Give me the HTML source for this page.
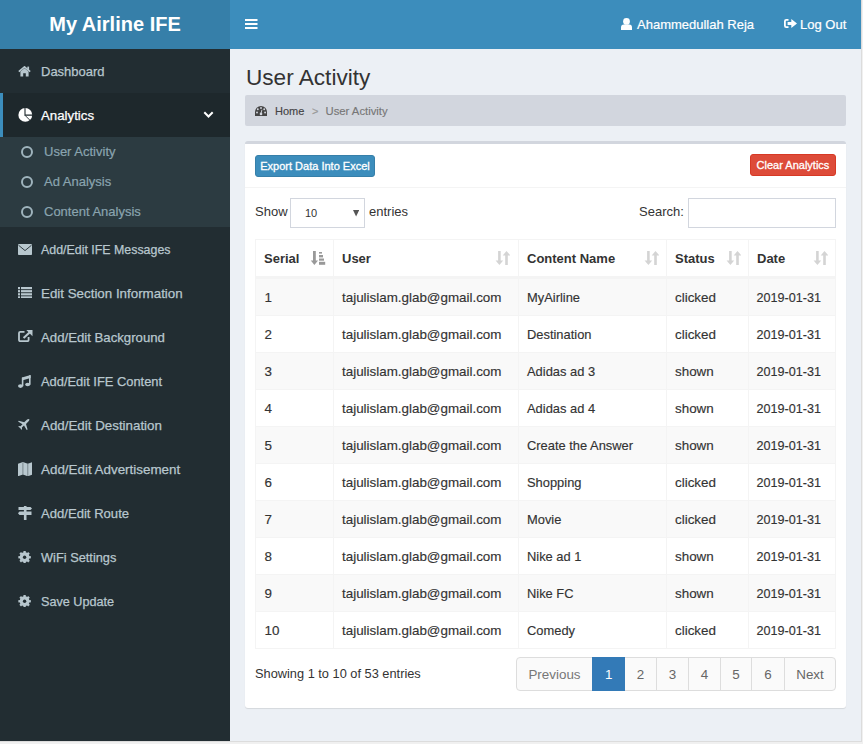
<!DOCTYPE html>
<html><head><meta charset="utf-8">
<style>
*{box-sizing:border-box;margin:0;padding:0}
html,body{width:863px;height:744px;overflow:hidden;background:#f0f0f0;font-family:"Liberation Sans",sans-serif;font-size:13px;color:#333}
.page{position:absolute;left:0;top:0;width:861px;height:741px;background:#ecf0f5;overflow:hidden}
.edge-r{position:absolute;left:861px;top:0;width:1px;height:742px;background:#dcdcdc}
.edge-b{position:absolute;left:0;top:741px;width:862px;height:1px;background:#dcdcdc}
.logo{position:absolute;left:0;top:0;width:230px;height:49px;background:#367fa9;color:#fff;font-weight:bold;font-size:20px;line-height:49px;text-align:center}
.navbar{position:absolute;left:230px;top:0;width:631px;height:49px;background:#3c8dbc;color:#fff;-webkit-text-stroke:0.2px #fff}
.sidebar{position:absolute;left:0;top:49px;width:230px;height:692px;background:#222d32}
.abs{position:absolute;white-space:nowrap}
.mi{position:absolute;left:0;width:230px;height:44px;color:#b8c7ce}
.mi .t{position:absolute;left:41px;top:1px;line-height:44px;-webkit-text-stroke:0.25px currentColor}
.mi svg{position:absolute}
.active{background:#1e282c;color:#fff;border-left:3px solid #3c8dbc}
.tree{position:absolute;left:0;top:88px;width:230px;height:90px;background:#2c3b41}
.ti{position:absolute;left:0;width:230px;height:30px;color:#8aa4af}
.ti .t{position:absolute;left:44px;line-height:30px;top:0;-webkit-text-stroke:0.2px currentColor}
.ti .c{position:absolute;left:20.7px;top:8.7px;width:12.5px;height:12.5px;border:2.3px solid #9fb4bd;border-radius:50%}
.content{position:absolute;left:230px;top:49px;width:631px;height:692px}

.title{position:absolute;left:246px;top:62.5px;font-size:22.6px;line-height:30px;color:#333;white-space:nowrap}
.bc{position:absolute;left:245px;top:95px;width:601px;height:31px;background:#d2d6de;border-radius:2px;font-size:11px;color:#444;-webkit-text-stroke:0.15px currentColor}
.box{position:absolute;left:245px;top:141px;width:601px;height:567px;background:#fff;border-top:3px solid #d2d6de;border-radius:3px;box-shadow:0 1px 1px rgba(0,0,0,0.1)}
.btn{position:absolute;color:#fff;border-radius:3px;font-size:11px;line-height:20px;text-align:center;white-space:nowrap;-webkit-text-stroke:0.3px #fff}
.inp{position:absolute;border:1px solid #d2d6de;background:#fff}
.tbl{position:absolute;left:255px;top:239px;width:581px;height:410px;border:1px solid #f4f4f4;z-index:2}
.tr{position:absolute;left:255px;width:581px;height:37px;border-top:1px solid #f4f4f4}
.tr span{position:absolute;top:1px;line-height:36px;font-size:13.4px;color:#333;white-space:nowrap;-webkit-text-stroke:0.15px #333}
.vl{position:absolute;top:239px;width:1px;height:410px;background:#f4f4f4;z-index:2}
.th{position:absolute;top:240px;line-height:38px;font-weight:bold;font-size:13px;color:#333;white-space:nowrap}
.pg{position:absolute;top:657px;height:34px;border:1px solid #ddd;background:#fafafa;color:#666;font-size:13.4px;line-height:34px;text-align:center}
</style></head><body>
<div class="page">
  <div class="logo">My Airline IFE</div>
  <div class="navbar">
    <svg class="abs" style="left:15px;top:19px" width="12.5" height="10" viewBox="0 0 12.5 10"><rect x="0" y="0" width="12.5" height="2" fill="#fff"/><rect x="0" y="4" width="12.5" height="2" fill="#fff"/><rect x="0" y="8" width="12.5" height="2" fill="#fff"/></svg>
    <svg class="abs" style="left:390.7px;top:17.8px" width="11" height="12" viewBox="0 0 11 12"><circle cx="5.5" cy="3.4" r="3.4" fill="#fff"/><path d="M0 12 L0 9.5 Q0 6.6 2.8 6.6 L8.2 6.6 Q11 6.6 11 9.5 L11 12Z" fill="#fff"/></svg>
    <div class="abs" style="left:407px;top:16px;line-height:18px">Ahammedullah Reja</div>
    <svg class="abs" style="left:554px;top:19.4px" width="13" height="9" viewBox="0 0 13 9"><path d="M4.5 0.9 L2.3 0.9 Q0.9 0.9 0.9 2.3 L0.9 6.7 Q0.9 8.1 2.3 8.1 L4.5 8.1" stroke="#fff" stroke-width="1.8" fill="none"/><path d="M3.6 2.9 L7.3 2.9 L7.3 0 L13 4.5 L7.3 9 L7.3 6.1 L3.6 6.1Z" fill="#fff"/></svg>
    <div class="abs" style="left:570px;top:16px;line-height:18px">Log Out</div>
  </div>
  <div class="sidebar">
    <div class="mi" style="top:0"><svg style="left:18px;top:17px" width="13" height="10.5" viewBox="0 0 13 10.5"><path d="M0.8 5.6 L6.5 0.9 L12.2 5.6" stroke="#b8c7ce" stroke-width="1.7" fill="none" stroke-linejoin="miter"/><rect x="9.3" y="0.6" width="1.8" height="3.5" fill="#b8c7ce"/><path d="M2.4 5.6 L6.5 2.3 L10.6 5.6 L10.6 10.5 L7.8 10.5 L7.8 7.3 L5.2 7.3 L5.2 10.5 L2.4 10.5Z" fill="#b8c7ce"/></svg><span class="t">Dashboard</span></div>
    <div class="mi active" style="top:44px"><svg style="left:14.5px;top:14.6px" width="15" height="14" viewBox="0 0 15 14"><circle cx="7.3" cy="6.9" r="6.9" fill="#fff"/><path d="M7 7 L7 -1 M6.5 7.1 L15 7.1" stroke="#1e282c" stroke-width="1.1"/><path d="M7 7.3 L12.5 12.8" stroke="#1e282c" stroke-width="0.9"/></svg><span class="t" style="left:38px;font-size:13.25px">Analytics</span><svg style="left:200px;top:18px" width="11" height="8" viewBox="0 0 11 8"><path d="M1.3 1.3 L5.5 5.5 L9.7 1.3" stroke="#fff" stroke-width="2" fill="none"/></svg></div>
    <div class="tree">
      <div class="ti" style="top:0"><span class="c"></span><span class="t">User Activity</span></div>
      <div class="ti" style="top:30px"><span class="c"></span><span class="t">Ad Analysis</span></div>
      <div class="ti" style="top:60px"><span class="c"></span><span class="t">Content Analysis</span></div>
    </div>
    <div class="mi" style="top:178px"><svg style="left:18px;top:17px" width="14" height="11" viewBox="0 0 14 11"><rect x="0" y="0" width="14" height="11" rx="0.8" fill="#b8c7ce"/><path d="M0.5 1.2 L7 6.6 L13.5 1.2" stroke="#222d32" stroke-width="0.9" fill="none"/></svg><span class="t" style="font-size:12.4px">Add/Edit IFE Messages</span></div>
    <div class="mi" style="top:222px"><svg style="left:18px;top:15.6px" width="14" height="11.5" viewBox="0 0 14 11.5"><rect x="0" y="0" width="2" height="2.2" fill="#b8c7ce"/><rect x="3" y="0" width="11" height="2.2" fill="#b8c7ce"/><rect x="0" y="3.1" width="2" height="2.2" fill="#b8c7ce"/><rect x="3" y="3.1" width="11" height="2.2" fill="#b8c7ce"/><rect x="0" y="6.2" width="2" height="2.2" fill="#b8c7ce"/><rect x="3" y="6.2" width="11" height="2.2" fill="#b8c7ce"/><rect x="0" y="9.3" width="2" height="2.2" fill="#b8c7ce"/><rect x="3" y="9.3" width="11" height="2.2" fill="#b8c7ce"/></svg><span class="t" style="font-size:13.35px">Edit Section Information</span></div>
    <div class="mi" style="top:266px"><svg style="left:18px;top:15px" width="14.5" height="12" viewBox="0 0 14.5 12"><path d="M6.5 1.8 L2.3 1.8 Q1 1.8 1 3.1 L1 10 Q1 11.2 2.3 11.2 L9.3 11.2 Q10.6 11.2 10.6 10 L10.6 7" stroke="#b8c7ce" stroke-width="1.8" fill="none"/><path d="M8.3 0 L14.5 0 L14.5 6.2Z" fill="#b8c7ce"/><path d="M5.6 8 L12.6 1.5" stroke="#b8c7ce" stroke-width="2.1"/></svg><span class="t" style="font-size:13.2px">Add/Edit Background</span></div>
    <div class="mi" style="top:310px"><svg style="left:18px;top:16.2px" width="13" height="13" viewBox="0 0 13 13"><path d="M4 2.6 L12.6 0 L12.6 2.9 L4 5.5Z" fill="#b8c7ce"/><rect x="3.8" y="2.6" width="1.6" height="8.6" fill="#b8c7ce"/><rect x="11" y="0.3" width="1.6" height="9.3" fill="#b8c7ce"/><ellipse cx="2.5" cy="11.1" rx="2.5" ry="1.8" fill="#b8c7ce"/><ellipse cx="9.7" cy="9.5" rx="2.5" ry="1.8" fill="#b8c7ce"/></svg><span class="t" style="font-size:12.9px">Add/Edit IFE Content</span></div>
    <div class="mi" style="top:354px"><svg style="left:18px;top:16px" width="11.5" height="11" viewBox="0 0 11.5 11"><path d="M11.2 0.3 Q11.8 0.9 10.8 2 L8 4.9 L9.6 10.4 L8.7 11 L6 6.6 L3.9 8.6 L4.1 10.2 L3.3 10.8 L2.2 8.9 L0.3 7.8 L0.9 7.1 L2.5 7.3 L4.5 5.2 L0.1 2.6 L0.7 1.8 L6.2 3.3 L9.1 0.6 Q10.4 -0.3 11.2 0.3Z" fill="#b8c7ce"/></svg><span class="t" style="font-size:13.35px">Add/Edit Destination</span></div>
    <div class="mi" style="top:398px"><svg style="left:17.5px;top:14.7px" width="14.7" height="14.3" viewBox="0 0 14.7 14.3"><path d="M0 1.8 L4.9 0 L9.8 1.8 L14.7 0 L14.7 12.5 L9.8 14.3 L4.9 12.5 L0 14.3Z" fill="#b8c7ce"/><path d="M4.9 0.5 L4.9 12.5 M9.8 2 L9.8 14" stroke="#222d32" stroke-width="0.7" opacity="0.6"/></svg><span class="t" style="font-size:13.4px">Add/Edit Advertisement</span></div>
    <div class="mi" style="top:442px"><svg style="left:18px;top:15px" width="14" height="14" viewBox="0 0 14 14"><rect x="5.9" y="0" width="2.6" height="14" fill="#b8c7ce"/><path d="M0.5 0.9 L12.5 0.9 L14 2.4 L12.5 3.9 L0.5 3.9Z" fill="#b8c7ce"/><path d="M1.5 5.6 L13.5 5.6 L13.5 8.9 L1.5 8.9 L0 7.25Z" fill="#b8c7ce"/></svg><span class="t" style="font-size:13.1px">Add/Edit Route</span></div>
    <div class="mi" style="top:486px"><svg style="left:17.5px;top:15.7px" width="13" height="12.5" viewBox="0 0 13 12.5"><circle cx="6.6" cy="6.25" r="4.9" fill="#b8c7ce"/><rect x="5.449999999999999" y="0.0" width="2.3" height="2.6" fill="#b8c7ce" transform="rotate(0 6.6 6.25)"/><rect x="5.449999999999999" y="0.0" width="2.3" height="2.6" fill="#b8c7ce" transform="rotate(45 6.6 6.25)"/><rect x="5.449999999999999" y="0.0" width="2.3" height="2.6" fill="#b8c7ce" transform="rotate(90 6.6 6.25)"/><rect x="5.449999999999999" y="0.0" width="2.3" height="2.6" fill="#b8c7ce" transform="rotate(135 6.6 6.25)"/><rect x="5.449999999999999" y="0.0" width="2.3" height="2.6" fill="#b8c7ce" transform="rotate(180 6.6 6.25)"/><rect x="5.449999999999999" y="0.0" width="2.3" height="2.6" fill="#b8c7ce" transform="rotate(225 6.6 6.25)"/><rect x="5.449999999999999" y="0.0" width="2.3" height="2.6" fill="#b8c7ce" transform="rotate(270 6.6 6.25)"/><rect x="5.449999999999999" y="0.0" width="2.3" height="2.6" fill="#b8c7ce" transform="rotate(315 6.6 6.25)"/><circle cx="6.6" cy="6.25" r="1.7" fill="#222d32"/></svg><span class="t" style="font-size:12.8px">WiFi Settings</span></div>
    <div class="mi" style="top:530px"><svg style="left:17.5px;top:15.7px" width="13" height="12.5" viewBox="0 0 13 12.5"><circle cx="6.6" cy="6.25" r="4.9" fill="#b8c7ce"/><rect x="5.449999999999999" y="0.0" width="2.3" height="2.6" fill="#b8c7ce" transform="rotate(0 6.6 6.25)"/><rect x="5.449999999999999" y="0.0" width="2.3" height="2.6" fill="#b8c7ce" transform="rotate(45 6.6 6.25)"/><rect x="5.449999999999999" y="0.0" width="2.3" height="2.6" fill="#b8c7ce" transform="rotate(90 6.6 6.25)"/><rect x="5.449999999999999" y="0.0" width="2.3" height="2.6" fill="#b8c7ce" transform="rotate(135 6.6 6.25)"/><rect x="5.449999999999999" y="0.0" width="2.3" height="2.6" fill="#b8c7ce" transform="rotate(180 6.6 6.25)"/><rect x="5.449999999999999" y="0.0" width="2.3" height="2.6" fill="#b8c7ce" transform="rotate(225 6.6 6.25)"/><rect x="5.449999999999999" y="0.0" width="2.3" height="2.6" fill="#b8c7ce" transform="rotate(270 6.6 6.25)"/><rect x="5.449999999999999" y="0.0" width="2.3" height="2.6" fill="#b8c7ce" transform="rotate(315 6.6 6.25)"/><circle cx="6.6" cy="6.25" r="1.7" fill="#222d32"/></svg><span class="t" style="font-size:12.65px">Save Update</span></div>
  </div>
  
  <div class="title">User Activity</div>
  <div class="bc">
    <svg class="abs" style="left:10px;top:10.9px" width="12" height="10" viewBox="0 0 12 10"><path d="M0 10 L0 6 A6 6 0 0 1 12 6 L12 10Z" fill="#444"/><g fill="#d2d6de"><circle cx="2" cy="6.5" r="0.95"/><circle cx="2.8" cy="3.3" r="0.95"/><circle cx="6" cy="2" r="0.95"/><circle cx="9.2" cy="3.3" r="0.95"/><circle cx="10.1" cy="6.5" r="0.95"/><circle cx="6" cy="7.9" r="1.3"/></g><path d="M6 7.8 L6.9 3.8" stroke="#d2d6de" stroke-width="0.9"/></svg>
    <div class="abs" style="left:30px;top:9px;line-height:15px">Home</div>
    <div class="abs" style="left:67px;top:9px;line-height:15px;color:#999">&gt;</div>
    <div class="abs" style="left:80.5px;top:9px;line-height:15px;color:#777;font-size:11.3px">User Activity</div>
  </div>
  <div class="box"></div>
  <div class="abs" style="left:245px;top:187px;width:601px;height:1px;background:#f4f4f4"></div>
  <div class="btn" style="left:255px;top:155px;width:120px;height:22px;background:#3c8dbc;border:1px solid #367fa9">Export Data Into Excel</div>
  <div class="btn" style="left:750px;top:154px;width:86px;height:22px;background:#dd4b39;border:1px solid #d73925">Clear Analytics</div>
  <div class="abs" style="left:255px;top:204px;line-height:16px">Show</div>
  <div class="inp" style="left:290px;top:198px;width:75px;height:30px"></div>
  <div class="abs" style="left:305px;top:206px;line-height:14px;font-size:11px">10</div>
  <svg class="abs" style="left:352.6px;top:210px" width="6.2" height="6.6" viewBox="0 0 6.2 6.6"><path d="M0 0 L6.2 0 L3.1 6.6Z" fill="#555"/></svg>
  <div class="abs" style="left:369px;top:204px;line-height:16px">entries</div>
  <div class="abs" style="left:639px;top:204px;line-height:16px">Search:</div>
  <div class="inp" style="left:688px;top:198px;width:148px;height:30px"></div>
  <div class="tbl"></div>
  <div class="abs" style="left:255px;top:276px;width:581px;height:2px;background:#f4f4f4"></div>
  <div class="vl" style="left:333px"></div>
  <div class="vl" style="left:518px"></div>
  <div class="vl" style="left:666px"></div>
  <div class="vl" style="left:748px"></div>
  <div class="th" style="left:264px">Serial</div>
  <div class="th" style="left:342px">User</div>
  <div class="th" style="left:527px">Content Name</div>
  <div class="th" style="left:675px">Status</div>
  <div class="th" style="left:757px">Date</div>
  <svg class="abs" style="left:310px;top:251px" width="16" height="14" viewBox="0 0 16 14"><path d="M4.4 0 L4.4 10" stroke="#999" stroke-width="2.8"/><path d="M0.8 9.5 L8 9.5 L4.4 14Z" fill="#999"/><rect x="9" y="1" width="3" height="1.6" fill="#999"/><rect x="9" y="4" width="4" height="2.4" fill="#999"/><rect x="9" y="7.5" width="5" height="2.2" fill="#999"/><rect x="9" y="10.8" width="6.2" height="3" fill="#999"/></svg>
  
  <div class="tr" style="top:278px;background:#f9f9f9"><span style="left:9.5px">1</span><span style="left:87px">tajulislam.glab@gmail.com</span><span style="left:272px;font-size:12.9px">MyAirline</span><span style="left:420px">clicked</span><span style="left:501.5px;font-size:12.6px">2019-01-31</span></div>
<div class="tr" style="top:315px;background:#fff"><span style="left:9.5px">2</span><span style="left:87px">tajulislam.glab@gmail.com</span><span style="left:272px;font-size:12.9px">Destination</span><span style="left:420px">clicked</span><span style="left:501.5px;font-size:12.6px">2019-01-31</span></div>
<div class="tr" style="top:352px;background:#f9f9f9"><span style="left:9.5px">3</span><span style="left:87px">tajulislam.glab@gmail.com</span><span style="left:272px;font-size:12.9px">Adidas ad 3</span><span style="left:420px">shown</span><span style="left:501.5px;font-size:12.6px">2019-01-31</span></div>
<div class="tr" style="top:389px;background:#fff"><span style="left:9.5px">4</span><span style="left:87px">tajulislam.glab@gmail.com</span><span style="left:272px;font-size:12.9px">Adidas ad 4</span><span style="left:420px">shown</span><span style="left:501.5px;font-size:12.6px">2019-01-31</span></div>
<div class="tr" style="top:426px;background:#f9f9f9"><span style="left:9.5px">5</span><span style="left:87px">tajulislam.glab@gmail.com</span><span style="left:272px;font-size:12.9px">Create the Answer</span><span style="left:420px">shown</span><span style="left:501.5px;font-size:12.6px">2019-01-31</span></div>
<div class="tr" style="top:463px;background:#fff"><span style="left:9.5px">6</span><span style="left:87px">tajulislam.glab@gmail.com</span><span style="left:272px;font-size:12.9px">Shopping</span><span style="left:420px">clicked</span><span style="left:501.5px;font-size:12.6px">2019-01-31</span></div>
<div class="tr" style="top:500px;background:#f9f9f9"><span style="left:9.5px">7</span><span style="left:87px">tajulislam.glab@gmail.com</span><span style="left:272px;font-size:12.9px">Movie</span><span style="left:420px">clicked</span><span style="left:501.5px;font-size:12.6px">2019-01-31</span></div>
<div class="tr" style="top:537px;background:#fff"><span style="left:9.5px">8</span><span style="left:87px">tajulislam.glab@gmail.com</span><span style="left:272px;font-size:12.9px">Nike ad 1</span><span style="left:420px">shown</span><span style="left:501.5px;font-size:12.6px">2019-01-31</span></div>
<div class="tr" style="top:574px;background:#f9f9f9"><span style="left:9.5px">9</span><span style="left:87px">tajulislam.glab@gmail.com</span><span style="left:272px;font-size:12.9px">Nike FC</span><span style="left:420px">shown</span><span style="left:501.5px;font-size:12.6px">2019-01-31</span></div>
<div class="tr" style="top:611px;background:#fff"><span style="left:9.5px">10</span><span style="left:87px">tajulislam.glab@gmail.com</span><span style="left:272px;font-size:12.9px">Comedy</span><span style="left:420px">clicked</span><span style="left:501.5px;font-size:12.6px">2019-01-31</span></div>
<svg class="abs" style="left:495px;top:251px" width="15" height="14" viewBox="0 0 15 14"><g fill="#d4d4d4"><rect x="3.1" y="0" width="2.6" height="10"/><path d="M0.6 9.6 L8.2 9.6 L4.4 14Z"/><rect x="10.2" y="4" width="2.6" height="10"/><path d="M7.7 4.4 L15.3 4.4 L11.5 0Z"/></g></svg>
<svg class="abs" style="left:644px;top:251px" width="15" height="14" viewBox="0 0 15 14"><g fill="#d4d4d4"><rect x="3.1" y="0" width="2.6" height="10"/><path d="M0.6 9.6 L8.2 9.6 L4.4 14Z"/><rect x="10.2" y="4" width="2.6" height="10"/><path d="M7.7 4.4 L15.3 4.4 L11.5 0Z"/></g></svg>
<svg class="abs" style="left:726px;top:251px" width="15" height="14" viewBox="0 0 15 14"><g fill="#d4d4d4"><rect x="3.1" y="0" width="2.6" height="10"/><path d="M0.6 9.6 L8.2 9.6 L4.4 14Z"/><rect x="10.2" y="4" width="2.6" height="10"/><path d="M7.7 4.4 L15.3 4.4 L11.5 0Z"/></g></svg>
<svg class="abs" style="left:813px;top:251px" width="15" height="14" viewBox="0 0 15 14"><g fill="#d4d4d4"><rect x="3.1" y="0" width="2.6" height="10"/><path d="M0.6 9.6 L8.2 9.6 L4.4 14Z"/><rect x="10.2" y="4" width="2.6" height="10"/><path d="M7.7 4.4 L15.3 4.4 L11.5 0Z"/></g></svg>
  <div class="abs" style="left:255px;top:666px;line-height:16px;font-size:12.8px">Showing 1 to 10 of 53 entries</div>
  <div class="pg" style="left:516px;width:77px;border-radius:4px 0 0 4px;color:#777">Previous</div>
  <div class="pg" style="left:592px;width:33.4px;background:#337ab7;border-color:#337ab7;color:#fff;z-index:3">1</div>
  <div class="pg" style="left:624px;width:33px">2</div>
  <div class="pg" style="left:656px;width:33px">3</div>
  <div class="pg" style="left:688px;width:33px">4</div>
  <div class="pg" style="left:720px;width:32px">5</div>
  <div class="pg" style="left:751px;width:34px">6</div>
  <div class="pg" style="left:784px;width:52px;border-radius:0 4px 4px 0">Next</div>

</div>
<div class="edge-r"></div><div class="edge-b"></div>
</body></html>
